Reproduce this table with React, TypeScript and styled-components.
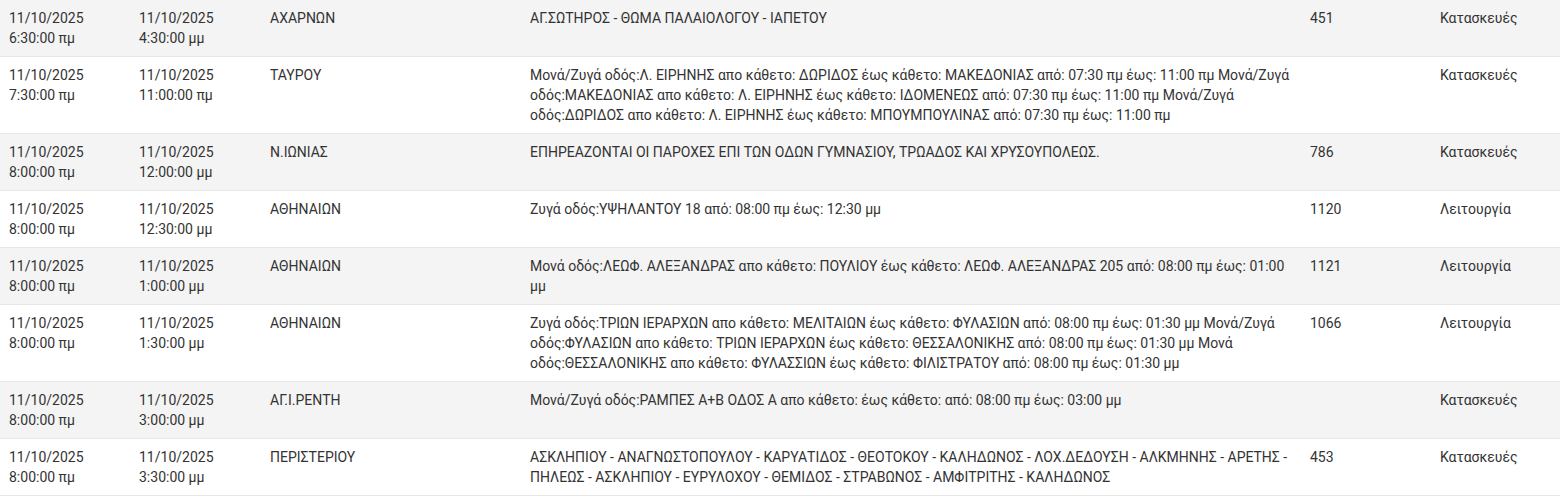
import React from "react";
import styled, { createGlobalStyle } from "styled-components";

const GlobalStyle = createGlobalStyle`
    html, body {
        margin: 0;
        padding: 0;
        background: #ffffff;
    }
`;

interface Outage {
    from: [string, string];
    to: [string, string];
    area: string;
    description: string;
    customers: string;
    kind: string;
}

const outages: Outage[] = [
    {
        from: ["11/10/2025", "6:30:00 πμ"],
        to: ["11/10/2025", "4:30:00 μμ"],
        area: "ΑΧΑΡΝΩΝ",
        description: "ΑΓ.ΣΩΤΗΡΟΣ - ΘΩΜΑ ΠΑΛΑΙΟΛΟΓΟΥ - ΙΑΠΕΤΟΥ",
        customers: "451",
        kind: "Κατασκευές",
    },
    {
        from: ["11/10/2025", "7:30:00 πμ"],
        to: ["11/10/2025", "11:00:00 πμ"],
        area: "ΤΑΥΡΟΥ",
        description:
            "Μονά/Ζυγά οδός:Λ. ΕΙΡΗΝΗΣ απο κάθετο: ΔΩΡΙΔΟΣ έως κάθετο: ΜΑΚΕΔΟΝΙΑΣ από: 07:30 πμ έως: 11:00 πμ Μονά/Ζυγά οδός:ΜΑΚΕΔΟΝΙΑΣ απο κάθετο: Λ. ΕΙΡΗΝΗΣ έως κάθετο: ΙΔΟΜΕΝΕΩΣ από: 07:30 πμ έως: 11:00 πμ Μονά/Ζυγά οδός:ΔΩΡΙΔΟΣ απο κάθετο: Λ. ΕΙΡΗΝΗΣ έως κάθετο: ΜΠΟΥΜΠΟΥΛΙΝΑΣ από: 07:30 πμ έως: 11:00 πμ",
        customers: "",
        kind: "Κατασκευές",
    },
    {
        from: ["11/10/2025", "8:00:00 πμ"],
        to: ["11/10/2025", "12:00:00 μμ"],
        area: "Ν.ΙΩΝΙΑΣ",
        description: "ΕΠΗΡΕΑΖΟΝΤΑΙ ΟΙ ΠΑΡΟΧΕΣ ΕΠΙ ΤΩΝ ΟΔΩΝ ΓΥΜΝΑΣΙΟΥ, ΤΡΩΑΔΟΣ ΚΑΙ ΧΡΥΣΟΥΠΟΛΕΩΣ.",
        customers: "786",
        kind: "Κατασκευές",
    },
    {
        from: ["11/10/2025", "8:00:00 πμ"],
        to: ["11/10/2025", "12:30:00 μμ"],
        area: "ΑΘΗΝΑΙΩΝ",
        description: "Ζυγά οδός:ΥΨΗΛΑΝΤΟΥ 18 από: 08:00 πμ έως: 12:30 μμ",
        customers: "1120",
        kind: "Λειτουργία",
    },
    {
        from: ["11/10/2025", "8:00:00 πμ"],
        to: ["11/10/2025", "1:00:00 μμ"],
        area: "ΑΘΗΝΑΙΩΝ",
        description:
            "Μονά οδός:ΛΕΩΦ. ΑΛΕΞΑΝΔΡΑΣ απο κάθετο: ΠΟΥΛΙΟΥ έως κάθετο: ΛΕΩΦ. ΑΛΕΞΑΝΔΡΑΣ 205 από: 08:00 πμ έως: 01:00 μμ",
        customers: "1121",
        kind: "Λειτουργία",
    },
    {
        from: ["11/10/2025", "8:00:00 πμ"],
        to: ["11/10/2025", "1:30:00 μμ"],
        area: "ΑΘΗΝΑΙΩΝ",
        description:
            "Ζυγά οδός:ΤΡΙΩΝ ΙΕΡΑΡΧΩΝ απο κάθετο: ΜΕΛΙΤΑΙΩΝ έως κάθετο: ΦΥΛΑΣΙΩΝ από: 08:00 πμ έως: 01:30 μμ Μονά/Ζυγά οδός:ΦΥΛΑΣΙΩΝ απο κάθετο: ΤΡΙΩΝ ΙΕΡΑΡΧΩΝ έως κάθετο: ΘΕΣΣΑΛΟΝΙΚΗΣ από: 08:00 πμ έως: 01:30 μμ Μονά οδός:ΘΕΣΣΑΛΟΝΙΚΗΣ απο κάθετο: ΦΥΛΑΣΣΙΩΝ έως κάθετο: ΦΙΛΙΣΤΡΑΤΟΥ από: 08:00 πμ έως: 01:30 μμ",
        customers: "1066",
        kind: "Λειτουργία",
    },
    {
        from: ["11/10/2025", "8:00:00 πμ"],
        to: ["11/10/2025", "3:00:00 μμ"],
        area: "ΑΓ.Ι.ΡΕΝΤΗ",
        description: "Μονά/Ζυγά οδός:ΡΑΜΠΕΣ Α+Β ΟΔΟΣ Α απο κάθετο: έως κάθετο: από: 08:00 πμ έως: 03:00 μμ",
        customers: "",
        kind: "Κατασκευές",
    },
    {
        from: ["11/10/2025", "8:00:00 πμ"],
        to: ["11/10/2025", "3:30:00 μμ"],
        area: "ΠΕΡΙΣΤΕΡΙΟΥ",
        description:
            "ΑΣΚΛΗΠΙΟΥ - ΑΝΑΓΝΩΣΤΟΠΟΥΛΟΥ - ΚΑΡΥΑΤΙΔΟΣ - ΘΕΟΤΟΚΟΥ - ΚΑΛΗΔΩΝΟΣ - ΛΟΧ.ΔΕΔΟΥΣΗ - ΑΛΚΜΗΝΗΣ - ΑΡΕΤΗΣ - ΠΗΛΕΩΣ - ΑΣΚΛΗΠΙΟΥ - ΕΥΡΥΛΟΧΟΥ - ΘΕΜΙΔΟΣ - ΣΤΡΑΒΩΝΟΣ - ΑΜΦΙΤΡΙΤΗΣ - ΚΑΛΗΔΩΝΟΣ",
        customers: "453",
        kind: "Κατασκευές",
    },
];

const Table = styled.div`
    width: 1560px;
    font-family: Roboto, "Noto Sans", sans-serif;
    font-size: 14px;
    line-height: 20px;
    color: #333333;
`;

const Row = styled.div<{ $striped: boolean }>`
    display: grid;
    grid-template-columns: 130px 131px 260px 780px 130px 1fr;
    background-color: ${props => props.$striped ? "#f4f4f4" : "#ffffff"};
    border-bottom: 1px solid #e7e7e7;
`;

const Cell = styled.div`
    padding: 8px 0 8px 9px;
    min-height: 40px;
    word-wrap: break-word;
`;

const Line = styled.div`
    white-space: nowrap;
`;

export default function App() {
    return (
        <>
            <GlobalStyle />
            <Table>
                {outages.map((o, i) => (
                    <Row key={i} $striped={i % 2 === 0}>
                        <Cell>
                            <Line>{o.from[0]}</Line>
                            <Line>{o.from[1]}</Line>
                        </Cell>
                        <Cell>
                            <Line>{o.to[0]}</Line>
                            <Line>{o.to[1]}</Line>
                        </Cell>
                        <Cell>{o.area}</Cell>
                        <Cell>{o.description}</Cell>
                        <Cell>{o.customers}</Cell>
                        <Cell>{o.kind}</Cell>
                    </Row>
                ))}
            </Table>
        </>
    );
}
